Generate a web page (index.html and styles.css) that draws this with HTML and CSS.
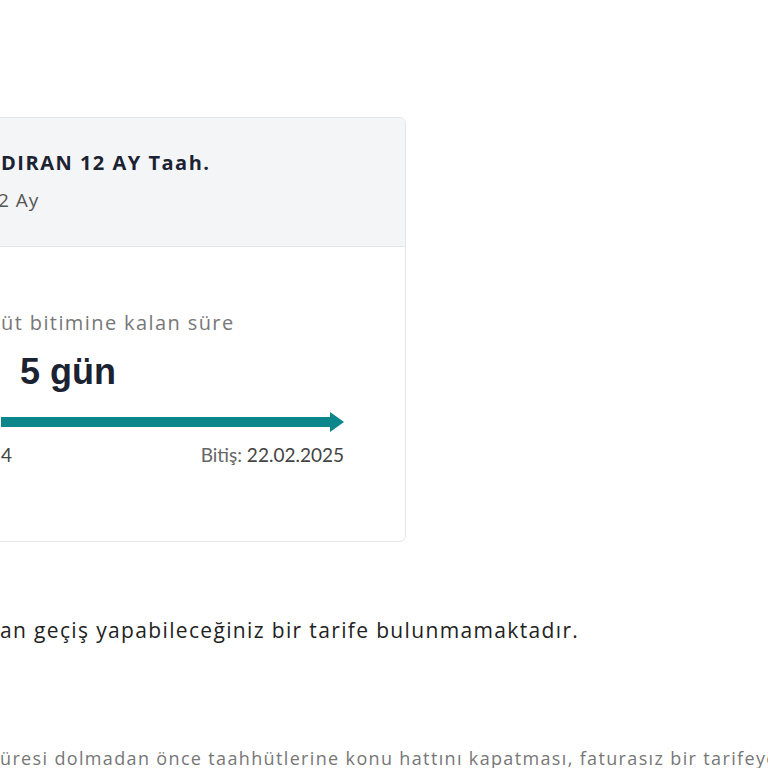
FILE: index.html
```html
<!DOCTYPE html>
<html lang="tr">
<head>
  <meta charset="UTF-8" />
  <meta name="viewport" content="width=device-width, initial-scale=1.0"/>
  <title>Taahhüt Bilgileri</title>
  <link rel="stylesheet" href="styles.css">
</head>
<body>
  <div class="page">
    <div class="tariff-card">
      <div class="card-head">
        <div class="tariff-name">DIRAN 12 AY Taah.</div>
        <div class="tariff-term">2 Ay</div>
      </div>
      <div class="card-body">
        <div class="remain-label">üt bitimine kalan süre</div>
        <div class="remain-value">5 gün</div>
        <div class="progress">
          <div class="progress-bar"></div>
          <div class="progress-head"></div>
        </div>
        <div class="dates">
          <span class="date">4</span>
          <span class="date"><span class="date-label">Bitiş:</span> 22.02.2025</span>
        </div>
      </div>
    </div>

    <p class="no-tariff">an geçiş yapabileceğiniz bir tarife bulunmamaktadır.</p>

    <p class="footnote">üresi dolmadan önce taahhütlerine konu hattını kapatması, faturasız bir tarifeye geçmesi</p>
  </div>
</body>
</html>
```

FILE: styles.css
```css
body {
  margin: 0;
  padding: 0;
  background: #fff;
  font-family: "Open Sans", "Noto Sans", sans-serif;
  color: #222;
  overflow: hidden;
}

.page {
  padding-top: 117px;
  width: 1000px;
}

.tariff-card {
  width: 426px;
  margin-left: -20px;
  border: 1px solid #e4e6ea;
  border-radius: 6px;
  box-sizing: border-box;
  overflow: hidden;
}

.card-head {
  background: #f4f5f7;
  border-bottom: 1px solid #e4e6ea;
  padding: 31px 20px 0;
  height: 129px;
  box-sizing: border-box;
}

.tariff-name {
  font-size: 20px;
  font-weight: bold;
  color: #1b2333;
  line-height: 28px;
  letter-spacing: 1.5px;
}

.tariff-term {
  font-size: 19px;
  color: #555;
  line-height: 26px;
  margin-top: 10px;
  margin-left: -3px;
  letter-spacing: 1px;
}

.card-body {
  padding: 62px 61px 74px 20px;
}

.remain-label {
  font-size: 20px;
  color: #777;
  line-height: 28px;
  letter-spacing: 1.4px;
}

.remain-value {
  font-family: "Liberation Sans", Arial, sans-serif;
  font-size: 36px;
  font-weight: bold;
  color: #1b2333;
  line-height: 42px;
  margin-top: 14px;
  padding-left: 19px;
}

.progress {
  display: flex;
  align-items: center;
  height: 20px;
  margin-top: 19px;
}

.progress-bar {
  flex: 1;
  height: 10px;
  background: #0b878c;
}

.progress-head {
  width: 0;
  height: 0;
  border-top: 10px solid transparent;
  border-bottom: 10px solid transparent;
  border-left: 14px solid #0b878c;
}

.dates {
  display: flex;
  justify-content: space-between;
  margin-top: 11px;
  font-family: Lato, sans-serif;
  font-size: 19px;
  line-height: 24px;
  color: #444;
}

.date-label {
  color: #666;
}

.no-tariff {
  margin: 74px 0 0;
  font-size: 21px;
  line-height: 28px;
  color: #222;
  letter-spacing: 1.35px;
}

.footnote {
  margin: 101px 0 0;
  font-size: 18px;
  line-height: 26px;
  color: #777;
  white-space: nowrap;
  letter-spacing: 1.35px;
}
```
